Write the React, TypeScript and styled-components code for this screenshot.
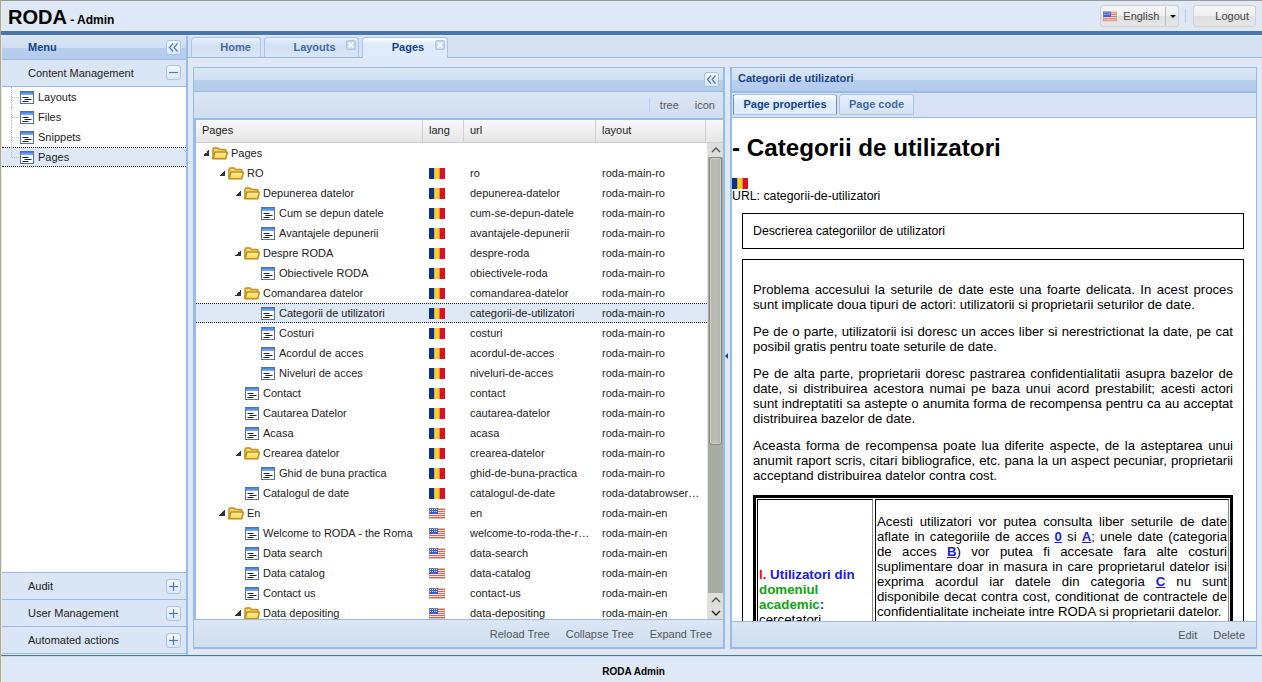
import React from 'react';
import styled, { createGlobalStyle } from 'styled-components';

const GlobalStyle = createGlobalStyle`
  html, body {
    margin: 0;
    padding: 0;
    height: 100%;
    overflow: hidden;
    background: #dfe8f6;
  }
  * { box-sizing: border-box; }
  body {
    font-family: "Liberation Sans", Arial, sans-serif;
    font-size: 11px;
    color: #222;
  }
`;

const HEAD_GRADIENT =
  'linear-gradient(to bottom, #dae6f4 0%, #cfdff2 50%, #b9cfee 51%, #b4cbec 100%)';
const BAR_GRADIENT = 'linear-gradient(to bottom, #dbe6f5 0%, #d0def0 100%)';

const Page = styled.div`
  width: 1262px;
  height: 682px;
  display: flex;
  flex-direction: column;
  background: #dfe8f6;
  border-left: 1px solid #b9ab7c;
  border-top: 1px solid #9a9a94;
`;

const TopBar = styled.header`
  height: 30px;
  padding: 0 6px 0 7px;
  display: flex;
  align-items: center;
  justify-content: space-between;
`;

const Brand = styled.div`
  color: #000;
  font-size: 12px;
  font-weight: bold;
  white-space: nowrap;
  line-height: 26px;
  padding-top: 4px;
  b {
    font-size: 20px;
  }
`;

const TopActions = styled.div`
  display: flex;
  align-items: center;
`;

const LangButton = styled.div`
  width: 79px;
  height: 22px;
  display: flex;
  align-items: center;
  padding-left: 2px;
  gap: 6px;
  color: #444;
  border: 1px solid #d0d0d0;
  border-radius: 3px;
  background: linear-gradient(to bottom, #f5f5f5 0%, #efefef 50%, #e0e0e0 51%, #e6e6e6 100%);
`;

const LangCaret = styled.span`
  margin-left: 0;
  width: 14px;
  height: 18px;
  border-left: 1px solid #bbb;
  position: relative;
  &::after {
    content: '';
    position: absolute;
    left: 4px;
    top: 8px;
    border-left: 3px solid transparent;
    border-right: 3px solid transparent;
    border-top: 3px solid #111;
  }
`;

const TopSep = styled.span`
  width: 1px;
  height: 14px;
  margin: 0 7px 0 6px;
  background: #b4cdf2;
`;

const LogoutButton = styled(LangButton)`
  width: 63px;
  justify-content: flex-end;
  padding: 0 6px 0 0;
`;

const BlueBar = styled.div`
  height: 4px;
  flex: none;
  background: #4b74a8;
`;

const Body = styled.div`
  flex: 1;
  min-height: 0;
  display: flex;
  padding-top: 1px;
  padding-left: 1px;
`;

const Sidebar = styled.aside`
  width: 184px;
  flex: none;
  display: flex;
  flex-direction: column;
  padding-bottom: 1px;
  background: #dae6f6;
`;

const Splitter = styled.div`
  width: 2px;
  flex: none;
  background: #99bbe8;
`;

const MenuHead = styled.div`
  height: 24px;
  flex: none;
  display: flex;
  align-items: center;
  justify-content: space-between;
  padding: 0 5px 1px 26px;
  background: ${HEAD_GRADIENT};
  color: #15428b;
  font-weight: bold;
  border-bottom: 1px solid #99bbe8;
`;

const Accordion = styled.div`
  flex: none;
  height: 27px;
  display: flex;
  align-items: center;
  justify-content: space-between;
  padding: 0 5px 0 26px;
  background: #dae6f6;
  color: #222;
  border-bottom: 1px solid #99bbe8;
`;

const AccordionOpen = styled(Accordion)`
  padding-bottom: 1px;
`;

const SideTree = styled.div`
  flex: 1;
  min-height: 0;
  background: #fff;
  border-bottom: 1px solid #99bbe8;
`;

const SideRow = styled.div<{ $selected?: boolean }>`
  height: 20px;
  display: flex;
  align-items: center;
  gap: 4px;
  padding-left: 18px;
  position: relative;
  background: ${p => (p.$selected ? '#dfe8f6' : 'transparent')};
  border-top: 1px ${p => (p.$selected ? 'dotted #222' : 'solid transparent')};
  border-bottom: 1px ${p => (p.$selected ? 'dotted #222' : 'solid transparent')};
  &::before {
    content: '';
    position: absolute;
    left: 9px;
    top: -1px;
    height: ${p => (p.$selected ? '10px' : '20px')};
    border-left: 1px dotted #bbb;
  }
  &::after {
    content: '';
    position: absolute;
    left: 10px;
    top: 9px;
    width: 7px;
    border-top: 1px dotted #bbb;
  }
`;

const IconBtn = styled.span`
  width: 15px;
  height: 15px;
  flex: none;
  display: flex;
  align-items: center;
  justify-content: center;
  border: 1px solid #a9c4ea;
  border-radius: 3px;
  background: linear-gradient(to bottom, #f4f8fe 0%, #dbe8fa 100%);
  svg {
    display: block;
  }
`;

const Main = styled.main`
  flex: 1;
  min-width: 0;
  display: flex;
  flex-direction: column;
`;

const TabStrip = styled.div`
  height: 24px;
  flex: none;
  display: flex;
  align-items: flex-end;
  gap: 3px;
  padding-left: 3px;
  background: #d5e2f4;
  border-bottom: 2px solid #dfe8f6;
  box-shadow: inset 0 -1px 0 #99bbe8, 0 1px 0 #99bbe8;
`;

const MainTab = styled.div<{ $active?: boolean; $w: number; $pad?: number }>`
  width: ${p => p.$w}px;
  height: 21px;
  position: relative;
  text-align: center;
  line-height: 19px;
  font-weight: bold;
  color: ${p => (p.$active ? '#15428b' : '#416aa3')};
  padding-left: ${p => p.$pad ?? 6}px;
  border: 1px solid #a9c4ea;
  border-bottom: ${p => (p.$active ? '0' : '1px solid #99bbe8')};
  border-radius: 4px 4px 0 0;
  background: ${p =>
    p.$active
      ? 'linear-gradient(to bottom, #fff 0%, #e0ebfb 30%, #deecfd 100%)'
      : 'linear-gradient(to bottom, #e8f0fb 0%, #d3e1f4 40%, #d9e5f6 100%)'};
`;

const TabClose = styled.span`
  position: absolute;
  right: 2px;
  top: 2px;
  width: 10px;
  height: 10px;
  border-radius: 2px;
  background: #c4d6f0;
  border: 1px solid #adc6e9;
  svg {
    display: block;
  }
`;

const Workspace = styled.div`
  flex: 1;
  min-height: 0;
  display: flex;
  padding: 7px 5px 6px 5px;
  background: #dfe8f6;
`;

const TreePanel = styled.section`
  width: 532px;
  flex: none;
  display: flex;
  flex-direction: column;
  background: #99bbe8;
  border: 2px solid #99bbe8;
  border-top: 1px solid #99bbe8;
  border-left: 1px solid #99bbe8;
`;

const Gap = styled.div`
  width: 5px;
  flex: none;
  position: relative;
  &::after {
    content: '';
    position: absolute;
    left: 0;
    top: 286px;
    border-top: 3px solid transparent;
    border-bottom: 3px solid transparent;
    border-right: 3px solid #15428b;
  }
`;

const DetailPanel = styled.section`
  width: 527px;
  flex: none;
  display: flex;
  flex-direction: column;
  border: 2px solid #99bbe8;
  border-top: 1px solid #99bbe8;
  border-right: 1px solid #99bbe8;
`;

const PanelHead = styled.div`
  height: 24px;
  flex: none;
  display: flex;
  align-items: center;
  justify-content: flex-end;
  padding: 0 4px 1px;
  background: ${HEAD_GRADIENT};
  border-bottom: 1px solid #99bbe8;
`;

const PanelTitle = styled(PanelHead)`
  justify-content: flex-start;
  padding: 0 0 3px 6px;
  color: #15428b;
  font-weight: bold;
`;

const Toolbar = styled.div`
  height: 28px;
  flex: none;
  display: flex;
  align-items: center;
  justify-content: flex-end;
  padding: 0 8px 1px 0;
  color: #555;
  background: ${BAR_GRADIENT};
  border-bottom: 2px solid #99bbe8;
`;

const ToolSep = styled.span`
  width: 1px;
  height: 14px;
  background: #b4cdf2;
  margin-right: 10px;
`;

const ToolLink = styled.span`
  & + & {
    margin-left: 16px;
  }
`;

const Grid = styled.div`
  flex: 1;
  min-height: 0;
  display: flex;
  flex-direction: column;
  margin-left: 2px;
  background: #fff;
  overflow: hidden;
  position: relative;
`;

const Columns = 'grid-template-columns: 227px 41px 132px 110px 16px;';

const GridHead = styled.div`
  height: 23px;
  flex: none;
  display: grid;
  ${Columns}
  background: linear-gradient(to bottom, #f9f9f9 0%, #e6e6e6 100%);
  border-bottom: 1px solid #d0d0d0;
`;

const HeadCell = styled.div`
  padding-left: 6px;
  line-height: 21px;
  border-right: 1px solid #d0d0d0;
  &:last-child {
    border-right: 0;
  }
`;

const Rows = styled.div`
  flex: 1;
  min-height: 0;
  overflow: hidden;
`;

const Row = styled.div<{ $selected?: boolean }>`
  height: 20px;
  display: grid;
  ${Columns}
  align-items: center;
  background: ${p => (p.$selected ? '#dfe8f6' : 'transparent')};
  border-top: 1px ${p => (p.$selected ? 'dotted #222' : 'solid transparent')};
  border-bottom: 1px ${p => (p.$selected ? 'dotted #222' : 'solid transparent')};
`;

const TreeCell = styled.div<{ $depth: number }>`
  display: flex;
  align-items: center;
  white-space: nowrap;
  overflow: hidden;
  gap: 2px;
  padding-left: ${p => 7 + p.$depth * 16}px;
`;

const Arrow = styled.span<{ $hidden?: boolean }>`
  width: 6px;
  height: 6px;
  flex: none;
  margin-right: 1px;
  visibility: ${p => (p.$hidden ? 'hidden' : 'visible')};
  background: linear-gradient(135deg, transparent 50%, #333 50%);
`;

const RowLabel = styled.span<{ $folder?: boolean }>`
  margin-left: ${p => (p.$folder ? 1 : 2)}px;
`;

const Cell = styled.div`
  padding-left: 6px;
  white-space: nowrap;
  overflow: hidden;
  text-overflow: ellipsis;
  svg {
    display: block;
  }
`;

const TextCell = styled(Cell)`
  padding-right: 5px;
`;

const Scrollbar = styled.div`
  position: absolute;
  right: 0;
  top: 23px;
  bottom: 0;
  width: 16px;
  display: flex;
  flex-direction: column;
  background: #a9aca3;
  border-left: 1px solid #e4e4e0;
`;

const ScrollBtn = styled.div`
  height: 13px;
  flex: none;
  display: flex;
  justify-content: center;
  align-items: center;
  background: #dededb;
  svg {
    display: block;
  }
`;

const ScrollTop = styled(ScrollBtn)`
  height: 14px;
`;

const ScrollTrack = styled.div`
  flex: 1;
  padding: 0 1px;
`;

const ScrollThumb = styled.div`
  height: 288px;
  border: 1px solid #85887f;
  border-radius: 3px;
  background: linear-gradient(to right, #b5b8af, #bcbeb6 50%, #b0b3aa);
  box-shadow: inset 0 0 0 1px #d0d1cb;
`;

const PanelFooter = styled.div`
  height: 28px;
  flex: none;
  display: flex;
  align-items: center;
  justify-content: flex-end;
  gap: 16px;
  padding-right: 11px;
  color: #555;
  background: ${BAR_GRADIENT};
  border-top: 1px solid #99bbe8;
`;

const DetailFooter = styled(PanelFooter)`
  height: 26px;
`;

const DetailTabs = styled.div`
  height: 26px;
  flex: none;
  display: flex;
  align-items: flex-start;
  gap: 2px;
  padding: 1px 0 0 1px;
  background: #d7e3f4;
  border-bottom: 1px solid #99bbe8;
  border-top: 1px solid #99bbe8;
`;

const DetailTab = styled.div<{ $active?: boolean; $w: number }>`
  width: ${p => p.$w}px;
  height: 21px;
  text-align: center;
  font-weight: bold;
  line-height: 19px;
  color: ${p => (p.$active ? '#15428b' : '#416aa3')};
  border: 1px solid #a9c4ea;
  border-radius: 3px 3px 0 0;
  background: ${p =>
    p.$active
      ? 'linear-gradient(to bottom, #fff, #deecfd 40%)'
      : 'linear-gradient(to bottom, #e8f0fb, #d3e1f4)'};
  border-left: ${p => (p.$active ? '1px dotted #222' : '1px solid #a9c4ea')};
  border-right: ${p => (p.$active ? '1px dotted #222' : '1px solid #a9c4ea')};
`;

const Content = styled.div`
  flex: 1;
  min-height: 0;
  overflow: hidden;
  background: #fff;
  color: #000;
  font-size: 12.3px;
  padding-top: 1px;
`;

const Title = styled.h1`
  margin: 15px 0 16px;
  font-size: 24.2px;
  line-height: 27px;
  color: #000;
`;

const FlagLine = styled.div`
  height: 11px;
  margin-top: 17px;
  svg {
    display: block;
  }
`;

const UrlLine = styled.div`
  line-height: 14px;
`;

const Box = styled.div`
  margin: 10px 12px 0 10px;
  border: 1px solid #000;
`;

const DescBox = styled(Box)`
  height: 36px;
  padding: 0 10px;
  line-height: 34px;
`;

const TextBox = styled(Box)`
  padding: 22px 10px 0;
  line-height: 15px;
  font-size: 13.15px;
`;

const Para = styled.p`
  margin: 0 0 12px;
  text-align: justify;
`;

const InnerTable = styled.div`
  margin-top: 12px;
  display: grid;
  grid-template-columns: 116px 354px;
  gap: 2px;
  padding: 1px;
  border: 3px solid #000;
`;

const InnerLabel = styled.div`
  border: 1px solid;
  border-color: #000 #888 #888 #000;
  padding: 67px 1px 0 1px;
  height: 200px;
  font-size: 13.33px;
`;

const InnerText = styled.div`
  border: 1px solid;
  border-color: #000 #888 #888 #000;
  padding: 14px 1px 0;
  text-align: justify;
  font-size: 13.2px;
`;

const Tone = styled.span<{ $c: string }>`
  color: ${p => p.$c};
  font-weight: bold;
`;

const AccessLink = styled.a`
  color: #1a1ae6;
  font-weight: bold;
  text-decoration: underline;
`;

const Footer = styled.footer`
  height: 27px;
  flex: none;
  border-top: 1px solid #4b74a8;
  background: #dfe8f6;
  color: #000;
  font-size: 10px;
  font-weight: bold;
  text-align: center;
  line-height: 32px;
  overflow: hidden;
  box-shadow: inset 0 1px 0 #c9d9f0;
  padding-left: 4px;
`;

const TreeGlyph = styled.svg<{ $shift?: number }>`
  flex: none;
  margin-left: ${p => p.$shift ?? 0}px;
`;

const DoubleLeft = () => (
  <IconBtn>
    <svg width="11" height="9" viewBox="0 0 11 9" fill="none" stroke="#4a7cc0" strokeWidth="1.2">
      <path d="M5 .5 1.5 4.500 5 8.500M9.500 .5 6 4.500 9.500 8.500" />
    </svg>
  </IconBtn>
);

const Toggle = ({ plus }: { plus?: boolean }) => (
  <IconBtn>
    <svg width="9" height="9" viewBox="0 0 9 9" stroke="#4a7cc0" strokeWidth="1.2">
      <path d="M0 4.500H9" />
      {plus && <path d="M4.500 0V9" />}
    </svg>
  </IconBtn>
);

const CloseGlyph = () => (
  <TabClose>
    <svg width="8" height="8" viewBox="0 0 8 8" fill="none" stroke="#fff" strokeWidth="1.6">
      <path d="M1.500 1.500 6.500 6.500M6.500 1.500 1.500 6.500" />
    </svg>
  </TabClose>
);

const FlagRO = () => (
  <svg width="16" height="11" viewBox="0 0 16 11">
    <rect width="5.500" height="11" fill="#0f2f80" />
    <rect x="5.500" width="5" height="11" fill="#fcd116" />
    <rect x="10.500" width="5.500" height="11" fill="#d8112c" />
  </svg>
);

const FlagUS = () => (
  <svg width="16" height="11" viewBox="0 0 16 11">
    <rect width="16" height="11" fill="#f2eeea" />
    <path d="M0 1.500H16M0 3.500H16M0 5.500H16M0 7.500H16M0 9.500H16" stroke="#e0604c" strokeWidth="1" />
    <rect width="9" height="6" fill="#3f5cd0" />
    <path d="M1 1.500h7M1 3.500h7" stroke="#e8ebfc" strokeWidth="1" strokeDasharray="1 1" />
    <rect x=".5" y=".5" width="15" height="10" fill="none" stroke="#9a9a9a" strokeOpacity=".5" />
  </svg>
);

const PageIcon = ({ shift }: { shift?: number }) => (
  <TreeGlyph $shift={shift} width="14" height="13" viewBox="0 0 14 13">
    <defs>
      <linearGradient id="pageHead" x1="0" y1="0" x2="0" y2="1">
        <stop offset="0" stopColor="#3f7fe0" />
        <stop offset="1" stopColor="#84b4f2" />
      </linearGradient>
    </defs>
    <rect x=".5" y=".5" width="13" height="12" fill="#fff" stroke="#54729e" />
    <rect x="1" y="1" width="12" height="3" fill="url(#pageHead)" />
    <path d="M2.500 6.500h6M4.500 8.500h7M2.500 10.500h6" stroke="#222" strokeWidth="1" />
  </TreeGlyph>
);

const FolderIcon = () => (
  <TreeGlyph width="16" height="13" viewBox="0 0 16 13">
    <defs>
      <linearGradient id="folderFront" x1="0" y1="0" x2="0" y2="1">
        <stop offset="0" stopColor="#fff3a8" />
        <stop offset="1" stopColor="#f6d050" />
      </linearGradient>
    </defs>
    <path d="M1 11V2.500Q1 1 2.500 1H6L7.500 2.500H12.500Q14 2.500 14 4V5" fill="#f6d968" stroke="#c08f18" strokeWidth="1.500" />
    <path d="M1 11.800 L3 5 H14.500 Q15.600 5 15.200 6.500 L13.700 11.800 Z" fill="url(#folderFront)" stroke="#c08f18" strokeWidth="1.500" />
  </TreeGlyph>
);

type TreeRow = {
  name: string;
  depth: number;
  folder?: boolean;
  lang?: 'ro' | 'en';
  url?: string;
  layout?: string;
  selected?: boolean;
};

const ro = 'roda-main-ro';
const en = 'roda-main-en';

const rows: TreeRow[] = [
  { name: 'Pages', depth: 0, folder: true },
  { name: 'RO', depth: 1, folder: true, lang: 'ro', url: 'ro', layout: ro },
  { name: 'Depunerea datelor', depth: 2, folder: true, lang: 'ro', url: 'depunerea-datelor', layout: ro },
  { name: 'Cum se depun datele', depth: 3, lang: 'ro', url: 'cum-se-depun-datele', layout: ro },
  { name: 'Avantajele depunerii', depth: 3, lang: 'ro', url: 'avantajele-depunerii', layout: ro },
  { name: 'Despre RODA', depth: 2, folder: true, lang: 'ro', url: 'despre-roda', layout: ro },
  { name: 'Obiectivele RODA', depth: 3, lang: 'ro', url: 'obiectivele-roda', layout: ro },
  { name: 'Comandarea datelor', depth: 2, folder: true, lang: 'ro', url: 'comandarea-datelor', layout: ro },
  { name: 'Categorii de utilizatori', depth: 3, lang: 'ro', url: 'categorii-de-utilizatori', layout: ro, selected: true },
  { name: 'Costuri', depth: 3, lang: 'ro', url: 'costuri', layout: ro },
  { name: 'Acordul de acces', depth: 3, lang: 'ro', url: 'acordul-de-acces', layout: ro },
  { name: 'Niveluri de acces', depth: 3, lang: 'ro', url: 'niveluri-de-acces', layout: ro },
  { name: 'Contact', depth: 2, lang: 'ro', url: 'contact', layout: ro },
  { name: 'Cautarea Datelor', depth: 2, lang: 'ro', url: 'cautarea-datelor', layout: ro },
  { name: 'Acasa', depth: 2, lang: 'ro', url: 'acasa', layout: ro },
  { name: 'Crearea datelor', depth: 2, folder: true, lang: 'ro', url: 'crearea-datelor', layout: ro },
  { name: 'Ghid de buna practica', depth: 3, lang: 'ro', url: 'ghid-de-buna-practica', layout: ro },
  { name: 'Catalogul de date', depth: 2, lang: 'ro', url: 'catalogul-de-date', layout: 'roda-databrowser-ro' },
  { name: 'En', depth: 1, folder: true, lang: 'en', url: 'en', layout: en },
  { name: 'Welcome to RODA - the Roma', depth: 2, lang: 'en', url: 'welcome-to-roda-the-romanian', layout: en },
  { name: 'Data search', depth: 2, lang: 'en', url: 'data-search', layout: en },
  { name: 'Data catalog', depth: 2, lang: 'en', url: 'data-catalog', layout: en },
  { name: 'Contact us', depth: 2, lang: 'en', url: 'contact-us', layout: en },
  { name: 'Data depositing', depth: 2, folder: true, lang: 'en', url: 'data-depositing', layout: en },
];

const App = () => (
  <Page>
    <GlobalStyle />
    <TopBar>
      <Brand>
        <b>RODA</b> - Admin
      </Brand>
      <TopActions>
        <LangButton>
          <FlagUS />
          English
          <LangCaret />
        </LangButton>
        <TopSep />
        <LogoutButton>Logout</LogoutButton>
      </TopActions>
    </TopBar>
    <BlueBar />
    <Body>
      <Sidebar>
        <MenuHead>
          Menu
          <DoubleLeft />
        </MenuHead>
        <AccordionOpen>
          Content Management
          <Toggle />
        </AccordionOpen>
        <SideTree>
          {['Layouts', 'Files', 'Snippets', 'Pages'].map(name => (
            <SideRow key={name} $selected={name === 'Pages'}>
              <PageIcon />
              {name}
            </SideRow>
          ))}
        </SideTree>
        <Accordion>
          Audit
          <Toggle plus />
        </Accordion>
        <Accordion>
          User Management
          <Toggle plus />
        </Accordion>
        <Accordion>
          Automated actions
          <Toggle plus />
        </Accordion>
      </Sidebar>
      <Splitter />
      <Main>
        <TabStrip>
          <MainTab $w={70} $pad={19}>
            Home
          </MainTab>
          <MainTab $w={95}>
            Layouts
            <CloseGlyph />
          </MainTab>
          <MainTab $w={86} $active>
            Pages
            <CloseGlyph />
          </MainTab>
        </TabStrip>
        <Workspace>
          <TreePanel>
            <PanelHead>
              <DoubleLeft />
            </PanelHead>
            <Toolbar>
              <ToolSep />
              <ToolLink>tree</ToolLink>
              <ToolLink>icon</ToolLink>
            </Toolbar>
            <Grid>
              <GridHead>
                <HeadCell>Pages</HeadCell>
                <HeadCell>lang</HeadCell>
                <HeadCell>url</HeadCell>
                <HeadCell>layout</HeadCell>
                <HeadCell />
              </GridHead>
              <Rows>
                {rows.map(row => (
                  <Row key={row.name + row.depth} $selected={row.selected}>
                    <TreeCell $depth={row.depth}>
                      <Arrow $hidden={!row.folder} />
                      {row.folder ? <FolderIcon /> : <PageIcon shift={1} />}
                      <RowLabel $folder={row.folder}>{row.name}</RowLabel>
                    </TreeCell>
                    <Cell>
                      {row.lang === 'ro' && <FlagRO />}
                      {row.lang === 'en' && <FlagUS />}
                    </Cell>
                    <TextCell>{row.url}</TextCell>
                    <TextCell>{row.layout}</TextCell>
                    <div />
                  </Row>
                ))}
              </Rows>
              <Scrollbar>
                <ScrollTop>
                  <svg width="10" height="6" viewBox="0 0 10 6" fill="none" stroke="#555" strokeWidth="1.4">
                    <path d="M1 5 5 1 9 5" />
                  </svg>
                </ScrollTop>
                <ScrollTrack>
                  <ScrollThumb />
                </ScrollTrack>
                <ScrollBtn>
                  <svg width="10" height="6" viewBox="0 0 10 6" fill="none" stroke="#555" strokeWidth="1.4">
                    <path d="M1 5 5 1 9 5" />
                  </svg>
                </ScrollBtn>
                <ScrollBtn>
                  <svg width="10" height="6" viewBox="0 0 10 6" fill="none" stroke="#222" strokeWidth="1.4">
                    <path d="M1 1 5 5 9 1" />
                  </svg>
                </ScrollBtn>
              </Scrollbar>
            </Grid>
            <PanelFooter>
              <span>Reload Tree</span>
              <span>Collapse Tree</span>
              <span>Expand Tree</span>
            </PanelFooter>
          </TreePanel>
          <Gap />
          <DetailPanel>
            <PanelTitle>Categorii de utilizatori</PanelTitle>
            <DetailTabs>
              <DetailTab $w={104} $active>
                Page properties
              </DetailTab>
              <DetailTab $w={75}>Page code</DetailTab>
            </DetailTabs>
            <Content>
              <Title>- Categorii de utilizatori</Title>
              <FlagLine>
                <FlagRO />
              </FlagLine>
              <UrlLine>URL: categorii-de-utilizatori</UrlLine>
              <DescBox>Descrierea categoriilor de utilizatori</DescBox>
              <TextBox>
                <Para>
                  Problema accesului la seturile de date este una foarte delicata. In acest proces sunt
                  implicate doua tipuri de actori: utilizatorii si proprietarii seturilor de date.
                </Para>
                <Para>
                  Pe de o parte, utilizatorii isi doresc un acces liber si nerestrictionat la date, pe cat
                  posibil gratis pentru toate seturile de date.
                </Para>
                <Para>
                  Pe de alta parte, proprietarii doresc pastrarea confidentialitatii asupra bazelor de date, si
                  distribuirea acestora numai pe baza unui acord prestabilit; acesti actori sunt indreptatiti sa
                  astepte o anumita forma de recompensa pentru ca au acceptat distribuirea bazelor de date.
                </Para>
                <Para>
                  Aceasta forma de recompensa poate lua diferite aspecte, de la asteptarea unui anumit raport
                  scris, citari bibliografice, etc. pana la un aspect pecuniar, proprietarii acceptand
                  distribuirea datelor contra cost.
                </Para>
                <InnerTable>
                  <InnerLabel>
                    <Tone $c="#e81010">I.</Tone> <Tone $c="#1a1ae6">Utilizatori din</Tone>{' '}
                    <Tone $c="#0ca60c">domeniul academic</Tone>
                    <Tone $c="#1a1ae6">:</Tone> cercetatori
                  </InnerLabel>
                  <InnerText>
                    Acesti utilizatori vor putea consulta liber seturile de date aflate in categoriile de acces{' '}
                    <AccessLink>0</AccessLink> si <AccessLink>A</AccessLink>; unele date (categoria de acces{' '}
                    <AccessLink>B</AccessLink>) vor putea fi accesate fara alte costuri suplimentare doar in masura
                    in care proprietarul datelor isi exprima acordul iar datele din categoria{' '}
                    <AccessLink>C</AccessLink> nu sunt disponibile decat contra cost, conditionat de contractele de
                    confidentialitate incheiate intre RODA si proprietarii datelor.
                  </InnerText>
                </InnerTable>
              </TextBox>
            </Content>
            <DetailFooter>
              <span>Edit</span>
              <span>Delete</span>
            </DetailFooter>
          </DetailPanel>
        </Workspace>
      </Main>
    </Body>
    <Footer>RODA Admin</Footer>
  </Page>
);

export default App;
